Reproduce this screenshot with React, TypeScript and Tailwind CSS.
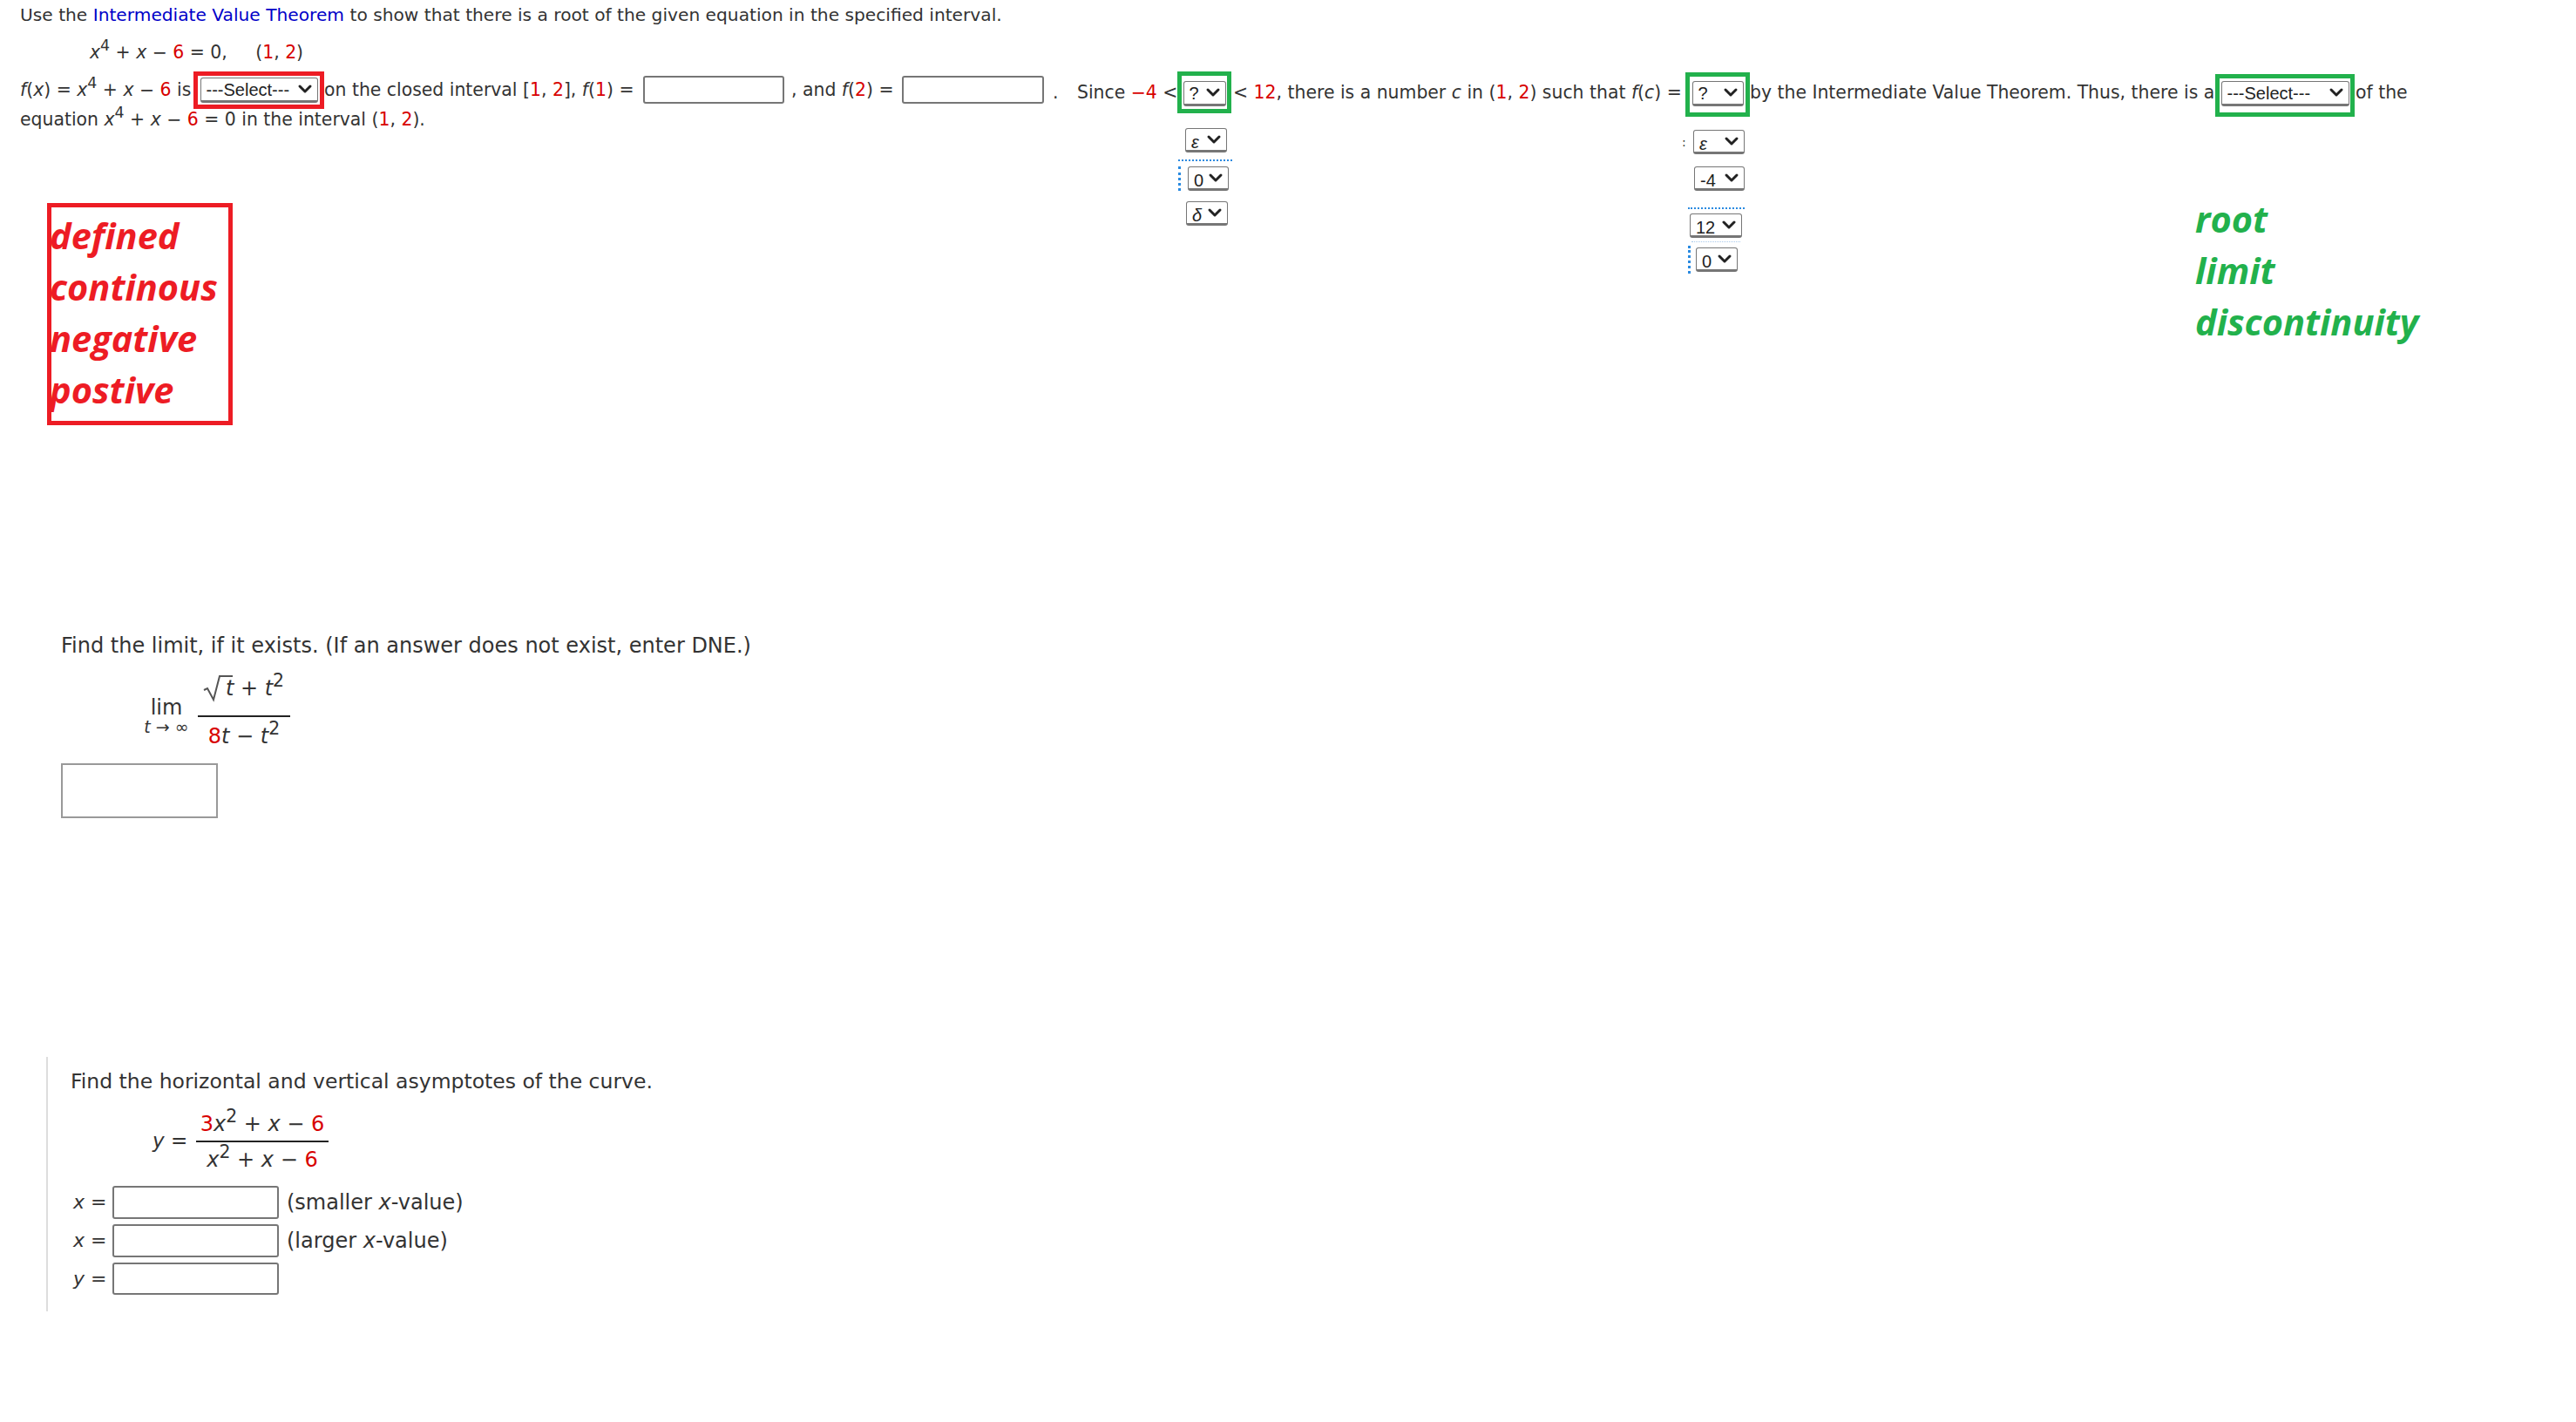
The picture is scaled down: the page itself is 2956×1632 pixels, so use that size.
import React from 'react';
import { ChevronDown } from 'lucide-react';

// shared bits
const R = ({ children }: { children: React.ReactNode }) => <span className="text-[#d80000]">{children}</span>;
const I = ({ children }: { children: React.ReactNode }) => <i className="italic">{children}</i>;
const Sup = ({ children }: { children: React.ReactNode }) => <sup className="text-[0.85em]">{children}</sup>;

const Dropdown = ({ label, className, italic }: { label: string; className: string; italic?: boolean }) => (
  <div className={`relative block shrink-0 ${className}`}>
    <select
      defaultValue={label}
      className={`block h-full w-full appearance-none rounded-[3px] border border-b-[3px] border-[#767676] bg-white pl-[6px] font-['Liberation_Sans',sans-serif] text-[20px] text-[#222] ${italic ? 'italic' : ''}`}
    >
      <option>{label}</option>
    </select>
    <ChevronDown size={24} strokeWidth={3} className="pointer-events-none absolute right-[3px] top-[1px] text-[#222]" />
  </div>
);

const Framed = ({ color, className, children }: { color: string; className: string; children: React.ReactNode }) => (
  <span className={`flex shrink-0 items-center justify-center border-[5px] ${color} ${className}`}>{children}</span>
);

const Field = ({ className }: { className: string }) => (
  <input type="text" className={`block shrink-0 rounded-[3px] border-2 border-[#767676] bg-white ${className}`} />
);

export default function App() {
  return (
    <div className="relative h-[1632px] w-[2956px] overflow-hidden bg-white font-['DejaVu_Sans',sans-serif] text-[#333]">
      {/* IVT question */}
      <div className="whitespace-nowrap text-[20.4px] leading-[24px]">
        <p className="pl-[23px] pt-[5px] text-[20.2px]">
          Use the <span className="text-[#0000c8]">Intermediate Value Theorem</span> to show that there is a root of the given equation in the specified interval.
        </p>
        <p className="pl-[103px] pt-[19px]">
          <I>x</I><Sup>4</Sup> + <I>x</I> − <R>6</R> = 0,&nbsp;&nbsp;&nbsp;&nbsp;&nbsp;(<R>1</R>, <R>2</R>)
        </p>
        <div className="mt-[10px] flex h-[42px] items-start pl-[23px]">
          <span className="mt-[9px] w-[199px] shrink-0"><I>f</I>(<I>x</I>) = <I>x</I><Sup>4</Sup> + <I>x</I> − <R>6</R> is</span>
          <Framed color="border-[#ed1c24]" className="h-[43px] w-[150px]"><Dropdown label="---Select---" className="h-[29px] w-[135px]" /></Framed>
          <span className="mt-[9px] w-[366px] shrink-0">on the closed interval [<R>1</R>, <R>2</R>], <I>f</I>(<R>1</R>) =</span>
          <Field className="mt-[5px] h-[32px] w-[162px]" />
          <span className="ml-[8px] mt-[9px] w-[127px] shrink-0">, and <I>f</I>(<R>2</R>) =</span>
          <Field className="mt-[5px] h-[32px] w-[163px]" />
          <span className="ml-[10px] mt-[12px] w-[28px] shrink-0">.</span>
          <span className="mt-[12px] w-[115px] shrink-0">Since <R>−4</R> &lt;</span>
          <Framed color="border-[#22b14c]" className="h-[48px] w-[62px] pt-[3px]"><Dropdown label="?" className="h-[29px] w-[49px]" /></Framed>
          <span className="mt-[12px] w-[521px] shrink-0 pl-[2px]">&lt; <R>12</R>, there is a number <I>c</I> in (<R>1</R>, <R>2</R>) such that <I>f</I>(<I>c</I>) =</span>
          <Framed color="border-[#22b14c]" className="mt-[1px] h-[51px] w-[74px] pb-[2px]"><Dropdown label="?" className="h-[29px] w-[59px]" /></Framed>
          <span className="mt-[12px] w-[534px] shrink-0">by the Intermediate Value Theorem. Thus, there is a</span>
          <Framed color="border-[#22b14c]" className="mt-[3px] h-[49px] w-[160px] pb-[4px]"><Dropdown label="---Select---" className="h-[29px] w-[147px]" /></Framed>
          <span className="ml-[1px] mt-[12px]">of the</span>
        </div>
      </div>

      <div className="flex items-start">
        <div className="w-[1352px] shrink-0">
          <p className="whitespace-nowrap pl-[23px] pt-[1px] text-[20.4px] leading-[24px]">
            equation <I>x</I><Sup>4</Sup> + <I>x</I> − <R>6</R> = 0 in the interval (<R>1</R>, <R>2</R>).
          </p>
          {/* red answer list */}
          <div className="ml-[54px] mt-[84px] h-[255px] w-[213px] overflow-hidden border-[5px] border-[#ed1c24] pt-[3px] font-['Open_Sans',sans-serif] text-[41.5px] font-bold italic leading-[59px] text-[#ed1c24]">
            <div className="-ml-[2px]">defined</div>
            <div className="-ml-[2px]">continous</div>
            <div className="-ml-[2px]">negative</div>
            <div className="-ml-[2px]">postive</div>
          </div>
        </div>

        <div className="flex w-[62px] shrink-0 flex-col pt-[23px]">
          <Dropdown label="ε" italic className="ml-[8px] h-[28px] w-[48px]" />
          <div className="mt-[8px] border-t-2 border-dotted border-[#2a8ae0] pt-[6px]">
            <div className="border-l-[3px] border-dotted border-[#2a8ae0] pl-[8px]">
              <Dropdown label="0" className="h-[28px] w-[47px]" />
            </div>
          </div>
          <Dropdown label="δ" italic className="ml-[9px] mt-[12px] h-[28px] w-[48px]" />
        </div>

        <div className="ml-[516px] flex w-[72px] shrink-0 flex-col pt-[25px]">
          <div className="flex items-center">
            <span className="w-[13px] text-[14px]">:</span>
            <Dropdown label="ε" italic className="h-[28px] w-[59px]" />
          </div>
          <Dropdown label="-4" className="ml-[14px] mt-[14px] h-[28px] w-[58px]" />
          <div className="ml-[7px] mt-[19px] border-t-2 border-dotted border-[#2a8ae0] pt-[5px]">
            <Dropdown label="12" className="ml-[2px] h-[28px] w-[60px]" />
          </div>
          <div className="ml-[11px] mt-[4px] w-[56px] border-t border-dotted border-[#a8c8ec]" />
          <div className="ml-[7px] mt-[4px] border-l-[3px] border-dotted border-[#2a8ae0] py-[2px] pl-[6px]">
            <Dropdown label="0" className="h-[28px] w-[48px]" />
          </div>
        </div>

        {/* green answer list */}
        <div className="ml-[517px] pt-[98px] font-['Open_Sans',sans-serif] text-[41.5px] font-bold italic leading-[59px] text-[#22b14c]">
          <div>root</div>
          <div>limit</div>
          <div>discontinuity</div>
        </div>
      </div>

      {/* limit question */}
      <div className="mt-[238px] pl-[70px] text-[24px] leading-[30px]">
        <p className="whitespace-nowrap">Find the limit, if it exists. (If an answer does not exist, enter DNE.)</p>
        <div className="mt-[18px] flex items-start pl-[93px]">
          <div className="mt-[25px] flex w-[56px] flex-col items-center">
            <span className="leading-[26px]">lim</span>
            <span className="whitespace-nowrap text-[19px] leading-[18px]"><I>t</I> → ∞</span>
          </div>
          <div className="ml-[8px] flex flex-col items-center">
            <span className="whitespace-nowrap pb-[15px] leading-[32px]">
              <span className="relative inline-block pl-[25px]">
                <svg className="absolute -left-[1px] -top-[1px] h-[34px] w-[35px]" viewBox="0 0 35 34" fill="none">
                  <path d="M1 19l4-2 7 13 7-27h15" stroke="#555" strokeWidth="2" />
                </svg>
                <I>t</I>
              </span> + <I>t</I><Sup>2</Sup>
            </span>
            <span className="h-[2px] w-[106px] bg-[#222]" />
            <span className="whitespace-nowrap pt-[6px] leading-[32px]"><R>8</R><I>t</I> − <I>t</I><Sup>2</Sup></span>
          </div>
        </div>
        <div className="mt-[15px] h-[63px] w-[180px] border-2 border-[#999]" />
      </div>

      {/* asymptote question */}
      <div className="ml-[53px] mt-[274px] h-[292px] border-l-2 border-[#ddd] pl-[26px] pt-[13px] text-[24px] leading-[30px]">
        <p className="whitespace-nowrap text-[23.5px]">Find the horizontal and vertical asymptotes of the curve.</p>
        <div className="mt-[17px] flex items-center pl-[94px]">
          <span className="-mt-[3px] w-[50px] whitespace-nowrap text-[23px]"><I>y</I> =</span>
          <div className="flex flex-col items-center">
            <span className="whitespace-nowrap pb-[2px] leading-[34px]"><R>3</R><I>x</I><Sup>2</Sup> + <I>x</I> − <R>6</R></span>
            <span className="h-[2px] w-[152px] bg-[#222]" />
            <span className="whitespace-nowrap pt-[3px] leading-[34px]"><I>x</I><Sup>2</Sup> + <I>x</I> − <R>6</R></span>
          </div>
        </div>
        <div className="mt-[13px] flex flex-col gap-[6px]">
          <div className="flex items-center">
            <span className="w-[48px] whitespace-nowrap pl-[3px] text-[22px]"><I>x</I> =</span>
            <Field className="h-[38px] w-[191px]" />
            <span className="ml-[9px] whitespace-nowrap">(smaller <I>x</I>-value)</span>
          </div>
          <div className="flex items-center">
            <span className="w-[48px] whitespace-nowrap pl-[3px] text-[22px]"><I>x</I> =</span>
            <Field className="h-[38px] w-[191px]" />
            <span className="ml-[9px] whitespace-nowrap">(larger <I>x</I>-value)</span>
          </div>
          <div className="flex items-center">
            <span className="w-[48px] whitespace-nowrap pl-[3px] text-[22px]"><I>y</I> =</span>
            <Field className="h-[37px] w-[191px]" />
          </div>
        </div>
      </div>
    </div>
  );
}
